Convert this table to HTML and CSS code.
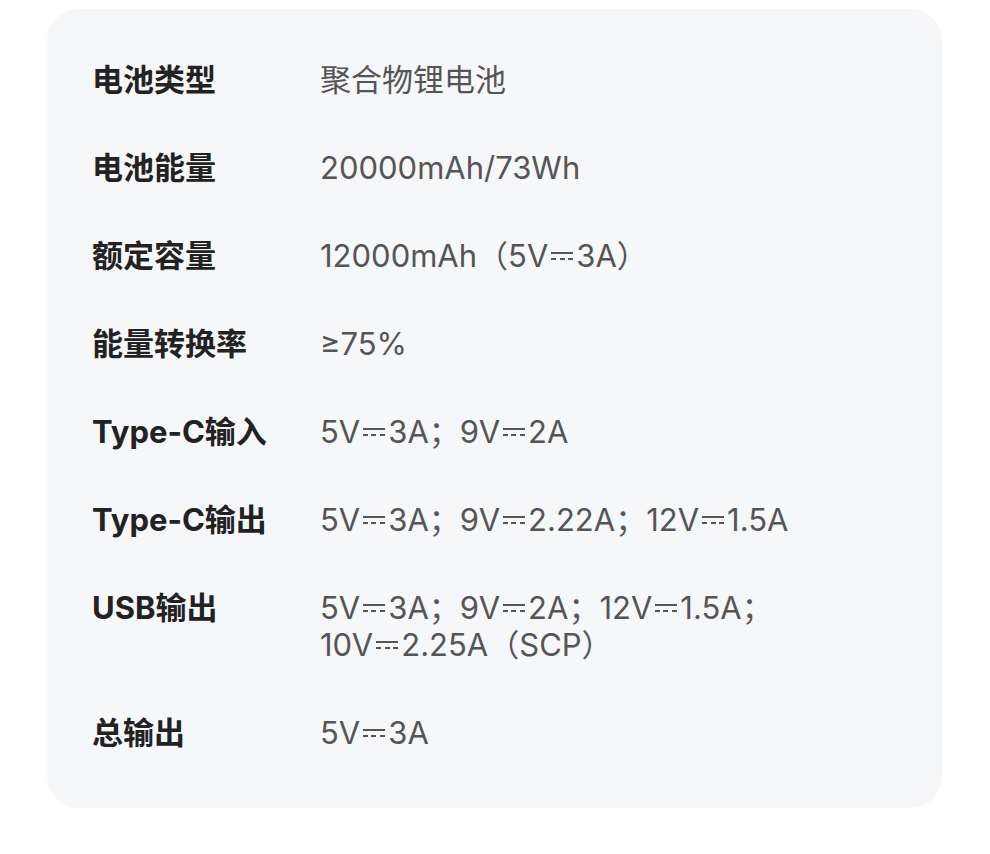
FILE: index.html
```html
<!DOCTYPE html>
<html lang="zh-CN">
<head>
<meta charset="utf-8">
<title>参数</title>
<link rel="stylesheet" href="styles.css">
</head>
<body>
<div class="card">
  <div class="row"><div class="label">电池类型</div><div class="value">聚合物锂电池</div></div>
  <div class="row"><div class="label">电池能量</div><div class="value">20000mAh/73Wh</div></div>
  <div class="row"><div class="label">额定容量</div><div class="value">12000mAh（5V<span class="dc"></span>3A）</div></div>
  <div class="row"><div class="label">能量转换率</div><div class="value">≥75%</div></div>
  <div class="row"><div class="label">Type-C输入</div><div class="value">5V<span class="dc"></span>3A；9V<span class="dc"></span>2A</div></div>
  <div class="row"><div class="label">Type-C输出</div><div class="value">5V<span class="dc"></span>3A；9V<span class="dc"></span>2.22A；12V<span class="dc"></span>1.5A</div></div>
  <div class="row"><div class="label">USB输出</div><div class="value">5V<span class="dc"></span>3A；9V<span class="dc"></span>2A；12V<span class="dc"></span>1.5A；<br>10V<span class="dc"></span>2.25A（SCP）</div></div>
  <div class="row"><div class="label">总输出</div><div class="value">5V<span class="dc"></span>3A</div></div>
</div>
</body>
</html>
```
FILE: styles.css
```css
html, body {
  margin: 0;
  padding: 0;
  background: #ffffff;
}
body {
  font-family: Inter, "Noto Sans CJK SC", sans-serif;
}
.card {
  margin: 9px 0 0 47px;
  width: 895px;
  height: 799px;
  box-sizing: border-box;
  background: #f6f7f9;
  border-radius: 32px;
  padding: 52px 0 0 45px;
  display: flex;
  flex-direction: column;
  gap: 51px;
}
.row {
  display: flex;
  font-size: 31px;
  line-height: 37px;
}
.label {
  width: 228px;
  flex: none;
  font-weight: 700;
  color: #222222;
}
.value {
  color: #555555;
  font-weight: 400;
}
.dc {
  display: inline-block;
  width: 22px;
  height: 8px;
  margin: 0 3px;
  vertical-align: 7px;
  border-top: 2px solid #555555;
  box-sizing: border-box;
  background: repeating-linear-gradient(to right, #555555 0 5px, transparent 5px 8.5px) bottom / 100% 2px no-repeat;
}
```
